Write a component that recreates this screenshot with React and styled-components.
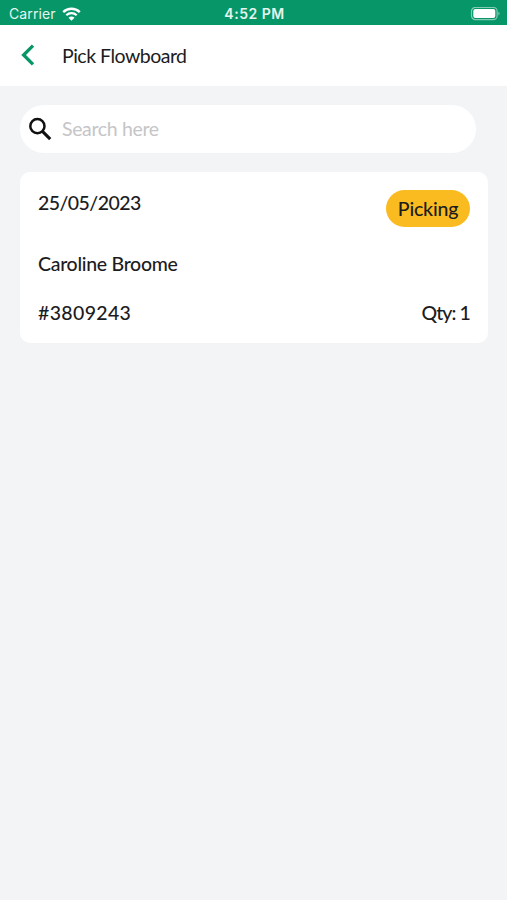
import React from 'react';
import styled, { createGlobalStyle } from 'styled-components';

const colors = {
  brand: '#069668',
  background: '#f2f4f6',
  surface: '#ffffff',
  text: '#1c1c1e',
  placeholder: '#c5c5c7',
  picking: '#fabb21',
};

const GlobalStyle = createGlobalStyle`
  * {
    box-sizing: border-box;
  }

  body {
    margin: 0;
    background: ${colors.background};
    color: ${colors.text};
    font-family: Lato, 'Open Sans', sans-serif;
  }
`;

const Screen = styled.div`
  min-height: 100vh;
  background: ${colors.background};
`;

const StatusBar = styled.div`
  display: grid;
  grid-template-columns: 1fr auto 1fr;
  align-items: center;
  height: 25px;
  padding: 2px 7px 0 9px;
  background: ${colors.brand};
  color: #e4f5ef;
  font-family: Inter, 'Liberation Sans', sans-serif;
  font-size: 14px;
  line-height: 20px;
`;

const Carrier = styled.div`
  display: flex;
  align-items: center;
  gap: 6px;
  letter-spacing: 0.1px;
`;

const Clock = styled.div`
  font-size: 14px;
  font-weight: 600;
  letter-spacing: 0.5px;
`;

const BatterySlot = styled.div`
  display: flex;
  justify-content: flex-end;
`;

const Header = styled.header`
  display: flex;
  align-items: center;
  height: 61px;
  padding-left: 21px;
  background: ${colors.surface};
`;

const BackButton = styled.button`
  display: flex;
  width: 41px;
  padding: 0 0 1px;
  border: 0;
  background: none;
`;

const Title = styled.h1`
  margin: 0;
  font-size: 19.5px;
  font-weight: 400;
  line-height: 24px;
  letter-spacing: -0.5px;
`;

const Content = styled.main`
  padding: 19px 19px 0 20px;
`;

const SearchBar = styled.label`
  display: flex;
  align-items: center;
  gap: 10px;
  height: 48px;
  margin: 0 12px 19px 0;
  padding-left: 8px;
  border-radius: 24px;
  background: ${colors.surface};
`;

const SearchInput = styled.input`
  flex: 1;
  padding: 0;
  border: 0;
  outline: 0;
  background: none;
  font-family: inherit;
  font-size: 19.5px;
  line-height: 24px;
  letter-spacing: -0.35px;

  &::placeholder {
    color: ${colors.placeholder};
    opacity: 1;
  }
`;

const Card = styled.article`
  height: 171px;
  padding: 18px 18px 0;
  border-radius: 10px;
  background: ${colors.surface};
`;

const CardRow = styled.div`
  display: flex;
  justify-content: space-between;
  align-items: flex-start;
  height: ${props => props.$height};
`;

const CardText = styled.span`
  font-size: 19.5px;
  font-weight: 500;
  line-height: 25px;
  letter-spacing: ${props => props.$tracking || '0'};
  white-space: nowrap;
`;

const Badge = styled.span`
  display: flex;
  align-items: center;
  justify-content: center;
  width: 84px;
  height: 37px;
  border-radius: 18.5px;
  background: ${colors.picking};
`;

const WifiIcon = () => (
  <svg width="19" height="14" viewBox="0 0 19 14" fill="none">
    <path d="M1.2 5.1C5.8 0.7 13.2 0.7 17.8 5.1" stroke="#fff" strokeWidth="2.4" />
    <path d="M4.3 8.2C7.2 5.5 11.8 5.5 14.7 8.2" stroke="#fff" strokeWidth="2.2" />
    <path d="M6.5 10.7C8.2 9.1 10.8 9.1 12.5 10.7L9.5 13.7Z" fill="#fff" />
  </svg>
);

const BatteryIcon = () => (
  <svg width="30" height="14" viewBox="0 0 30 14" fill="none">
    <rect x="1.5" y="0.4" width="25.6" height="12.2" rx="3.8" stroke="#83cbb4" strokeWidth="1.2" />
    <rect x="3.3" y="2.1" width="22" height="8.8" rx="2" fill="#fff" />
    <path d="M28.4 4.5C29.9 5 29.9 8 28.4 8.5Z" fill="#83cbb4" />
  </svg>
);

const BackIcon = () => (
  <svg width="14" height="22" viewBox="0 0 14 22" fill="none">
    <path d="M12 1.6L2.6 11L12 20.4" stroke={colors.brand} strokeWidth="3.3" />
  </svg>
);

const SearchIcon = () => (
  <svg width="24" height="24" viewBox="0 0 24 24" fill="none">
    <circle cx="9.4" cy="9.2" r="7.1" stroke="#111" strokeWidth="2.5" />
    <path d="M14.2 14.2L22.2 22.2" stroke="#111" strokeWidth="3.1" />
  </svg>
);

const OrderCard = ({ date, status, customer, reference, quantity }) => (
  <Card>
    <CardRow $height="61px">
      <CardText $tracking="-0.55px">{date}</CardText>
      <Badge>
        <CardText $tracking="-0.2px">{status}</CardText>
      </Badge>
    </CardRow>
    <CardRow $height="49px">
      <CardText $tracking="-0.3px">{customer}</CardText>
    </CardRow>
    <CardRow $height="25px">
      <CardText $tracking="0.35px">{reference}</CardText>
      <CardText $tracking="-0.9px">Qty: {quantity}</CardText>
    </CardRow>
  </Card>
);

const App = () => (
  <Screen>
    <GlobalStyle />
    <StatusBar>
      <Carrier>
        Carrier
        <WifiIcon />
      </Carrier>
      <Clock>4:52 PM</Clock>
      <BatterySlot>
        <BatteryIcon />
      </BatterySlot>
    </StatusBar>
    <Header>
      <BackButton aria-label="Back">
        <BackIcon />
      </BackButton>
      <Title>Pick Flowboard</Title>
    </Header>
    <Content>
      <SearchBar>
        <SearchIcon />
        <SearchInput placeholder="Search here" />
      </SearchBar>
      <OrderCard
        date="25/05/2023"
        status="Picking"
        customer="Caroline Broome"
        reference="#3809243"
        quantity={1}
      />
    </Content>
  </Screen>
);

export default App;
